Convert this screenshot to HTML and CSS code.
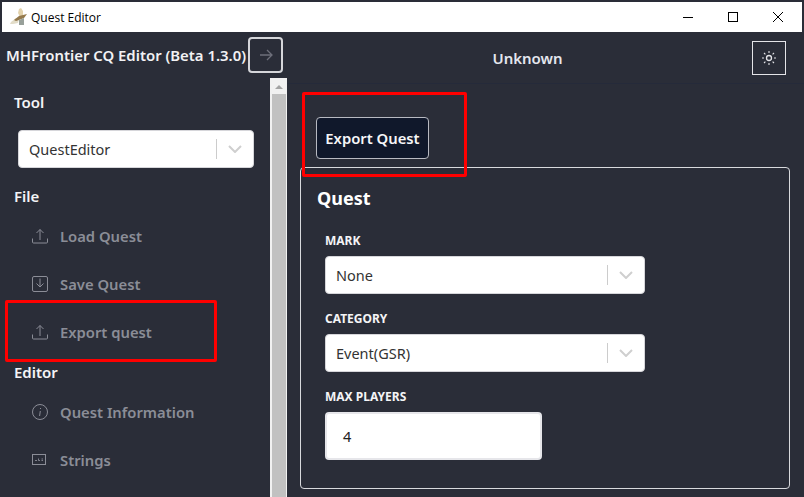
FILE: index.html
```html
<!DOCTYPE html>
<html lang="en">
<head>
  <meta charset="UTF-8">
  <title>Quest Editor</title>
  <link rel="stylesheet" href="styles.css">
</head>
<body>

  <div class="titlebar">
    <svg class="app-icon" width="18" height="18" viewBox="0 0 18 18">
      <path d="M9 1 L11 0 L13 3 L13 8 L10 9 L8 5 Z" fill="#e3d3ae"/>
      <path d="M1 14 L6 10 L9 11 L8 15 L3 16 L0 16 Z" fill="#e2dcc8"/>
      <path d="M4 12 L9 8 L13 7 L17 6 L14 10 L9 12 L6 13 Z" fill="#94794c"/>
      <path d="M9 12 L14 10 L14 17 L9 17 Z" fill="#98a09a"/>
    </svg>
    <span class="titlebar-text">Quest Editor</span>
    <div class="win-controls">
      <svg width="10" height="10" viewBox="0 0 10 10"><path d="M0 5.5H10" stroke="#000" stroke-width="1"/></svg>
      <svg width="10" height="10" viewBox="0 0 10 10"><rect x=".5" y=".5" width="9" height="9" fill="none" stroke="#000"/></svg>
      <svg width="10" height="10" viewBox="0 0 10 10"><path d="M0 0L10 10M10 0L0 10" stroke="#000" stroke-width="1"/></svg>
    </div>
  </div>

  <div class="app">
    <aside class="sidebar">
      <div class="side-header">
        <span class="app-name">MHFrontier CQ Editor (Beta 1.3.0)</span>
        <button class="collapse-btn">
          <svg width="14" height="14" viewBox="0 0 14 14" fill="none" stroke="#6d6f7a" stroke-width="1.3"><path d="M1 7H13M8 2L13 7L8 12"/></svg>
        </button>
      </div>
      <div class="side-body">
        <nav class="side-nav">
          <h3 class="nav-title">Tool</h3>
          <div class="select tool-select">
            <span class="select-value">QuestEditor</span>
            <span class="select-sep"></span>
            <svg class="select-arrow" width="14" height="8" viewBox="0 0 14 8" fill="none" stroke="#cfcfcf" stroke-width="2"><path d="M1 1L7 7L13 1"/></svg>
          </div>

          <h3 class="nav-title file-title">File</h3>
          <a class="nav-item">
            <svg width="16" height="16" viewBox="0 0 16 16" fill="none" stroke="#8b8d97" stroke-width="1"><path d="M.5 10.5V14a1 1 0 0 0 1 1h13a1 1 0 0 0 1-1V10.5M8 12V1.5M4.5 5L8 1.5L11.5 5"/></svg>
            Load Quest
          </a>
          <a class="nav-item">
            <svg width="16" height="16" viewBox="0 0 16 16" fill="none" stroke="#8b8d97" stroke-width="1"><rect x=".5" y=".5" width="15" height="15" rx="1.5"/><path d="M8 2.5V11M4.5 7.5L8 11L11.5 7.5"/></svg>
            Save Quest
          </a>
          <a class="nav-item">
            <svg width="16" height="16" viewBox="0 0 16 16" fill="none" stroke="#8b8d97" stroke-width="1"><path d="M.5 10.5V14a1 1 0 0 0 1 1h13a1 1 0 0 0 1-1V10.5M8 12V1.5M4.5 5L8 1.5L11.5 5"/></svg>
            Export quest
          </a>

          <h3 class="nav-title editor-title">Editor</h3>
          <a class="nav-item">
            <svg width="16" height="16" viewBox="0 0 16 16" fill="none" stroke="#8b8d97" stroke-width="1"><circle cx="8" cy="8" r="7.5"/><path d="M8.3 7L7.6 12M8.5 4V5"/></svg>
            Quest Information
          </a>
          <a class="nav-item">
            <svg width="16" height="16" viewBox="0 0 16 16" fill="none" stroke="#8b8d97" stroke-width="1"><rect x=".5" y="2.5" width="13" height="10"/><path d="M3 8.5H5M6.5 6.5V8.5H8M9.5 7H11M9.5 8.5H11" stroke-width=".9"/></svg>
            Strings
          </a>
        </nav>
        <div class="scrollbar">
          <span class="scroll-up"></span>
          <span class="scroll-thumb"></span>
        </div>
      </div>
    </aside>

    <main class="content">
      <header class="top-header">
        <span class="quest-name">Unknown</span>
        <button class="theme-btn">
          <svg width="14" height="14" viewBox="0 0 14 14" fill="none" stroke="#e4e4e8"><circle cx="7" cy="7" r="2.5" stroke-width="1.3"/><path d="M7 0V2M7 12V14M0 7H2M12 7H14M2 2L3.4 3.4M10.6 10.6L12 12M2 12L3.4 10.6M10.6 3.4L12 2" stroke-width="1.1"/></svg>
        </button>
      </header>

      <div class="content-body">
        <button class="export-btn">Export Quest</button>

        <section class="panel">
          <h2 class="panel-title">Quest</h2>

          <label class="field-label">MARK</label>
          <div class="select field-select">
            <span class="select-value">None</span>
            <span class="select-sep"></span>
            <svg class="select-arrow" width="14" height="8" viewBox="0 0 14 8" fill="none" stroke="#cfcfcf" stroke-width="2"><path d="M1 1L7 7L13 1"/></svg>
          </div>

          <label class="field-label">CATEGORY</label>
          <div class="select field-select">
            <span class="select-value">Event(GSR)</span>
            <span class="select-sep"></span>
            <svg class="select-arrow" width="14" height="8" viewBox="0 0 14 8" fill="none" stroke="#cfcfcf" stroke-width="2"><path d="M1 1L7 7L13 1"/></svg>
          </div>

          <label class="field-label">MAX PLAYERS</label>
          <div class="number-input">4</div>
        </section>
      </div>
    </main>
  </div>

  <!-- marcas rojas sobre la captura -->
  <div class="mark mark-top"></div>
  <div class="mark mark-side"></div>

</body>
</html>
```

FILE: styles.css
```css
* {
  box-sizing: border-box;
}

html, body {
  margin: 0;
  height: 497px;
  overflow: hidden;
}

body {
  position: relative;
  font-family: "Noto Sans", sans-serif;
  background-color: #2a2d38;
  padding-top: 2px;
  display: flex;
  flex-direction: column;
}

.titlebar {
  height: 30px;
  margin: 0 2px;
  background-color: #ffffff;
  display: flex;
  align-items: center;
  padding-left: 8px;
  flex-shrink: 0;
}

.app-icon {
  margin-right: 11px;
}

.titlebar-text {
  font-family: "Open Sans", sans-serif;
  font-size: 12px;
  color: #000;
  margin-left: -8px;
}

.win-controls {
  margin-left: auto;
  display: flex;
  gap: 35px;
  padding-right: 19px;
}

.app {
  flex: 1;
  display: flex;
  min-height: 0;
}

.sidebar {
  width: 287px;
  flex-shrink: 0;
  display: flex;
  flex-direction: column;
}

.side-header {
  height: 46px;
  display: flex;
  align-items: center;
  padding-left: 6px;
}

.app-name {
  font-size: 14.9px;
  font-weight: 600;
  color: #f2f2f4;
  white-space: nowrap;
  width: 242px;
}

.collapse-btn {
  width: 35px;
  height: 36px;
  padding: 0;
  background: transparent;
  border: 2px solid #d5d6da;
  border-radius: 4px;
  display: flex;
  align-items: center;
  justify-content: center;
}

.side-body {
  flex: 1;
  display: flex;
  min-height: 0;
}

.side-nav {
  width: 270px;
  padding: 14px 0 0 14px;
}

.nav-title {
  margin: 0;
  font-size: 15px;
  line-height: 20px;
  font-weight: 600;
  color: #f4f4f6;
}

.select {
  background-color: #ffffff;
  border: 1px solid #d6d6da;
  border-radius: 4px;
  height: 38px;
  display: flex;
  align-items: center;
  padding-left: 10px;
  color: #333;
  font-size: 14.5px;
}

.tool-select {
  width: 236px;
  margin: 18px 0 0 4px;
}

.select-value {
  flex: 1;
}

.select-sep {
  width: 1px;
  height: 20px;
  background-color: #cccccc;
}

.select-arrow {
  margin: 0 11px;
}

.file-title {
  margin-top: 18px;
}

.editor-title {
  margin-top: 6px;
}

.nav-item {
  display: flex;
  align-items: center;
  gap: 12px;
  height: 48px;
  padding-left: 18px;
  font-size: 14.8px;
  font-weight: 600;
  color: #8b8d97;
}

.file-title + .nav-item {
  margin-top: 6px;
}

.editor-title + .nav-item {
  margin-top: 6px;
}

.scrollbar {
  width: 17px;
  background-color: #f1f1f1;
  display: flex;
  flex-direction: column;
  align-items: center;
}

.scroll-up {
  width: 0;
  height: 0;
  margin: 7px 0 5px;
  border-left: 4px solid transparent;
  border-right: 4px solid transparent;
  border-bottom: 4px solid #a3a3a3;
}

.scroll-thumb {
  flex: 1;
  width: 14px;
  background-color: #c1c1c1;
}

.content {
  flex: 1;
  display: flex;
  flex-direction: column;
  min-width: 0;
}

.top-header {
  height: 52px;
  border-bottom: 1px solid #252a3a;
  display: flex;
  align-items: center;
  padding-right: 18px;
  flex-shrink: 0;
}

.quest-name {
  flex: 1;
  text-align: center;
  font-size: 15px;
  font-weight: 600;
  color: #e4e6ee;
  padding-left: 16px;
}

.theme-btn {
  width: 34px;
  height: 34px;
  padding: 0;
  background: transparent;
  border: 1px solid #e4e4e8;
  display: flex;
  align-items: center;
  justify-content: center;
}

.content-body {
  padding: 33px 14px 0 13px;
}

.export-btn {
  display: block;
  width: 113px;
  height: 42px;
  margin-left: 16px;
  padding: 0;
  background-color: #10182b;
  border: 1px solid #b8bac2;
  border-radius: 4px;
  color: #f6f6f8;
  font-family: inherit;
  font-size: 14.8px;
  font-weight: 600;
}

.panel {
  margin-top: 8px;
  height: 322px;
  border: 1px solid #d8d9dd;
  border-radius: 4px;
  padding: 16px 16px 0 24px;
}

.panel-title {
  margin: 0 0 0 -8px;
  font-size: 18px;
  line-height: 28px;
  font-weight: 700;
  color: #ffffff;
}

.field-label {
  display: block;
  font-size: 12px;
  line-height: 16px;
  font-weight: 700;
  color: #f4f4f6;
}

.panel-title + .field-label {
  margin-top: 21px;
}

.field-select {
  width: 320px;
  margin-top: 7px;
  margin-bottom: 17px;
}

.number-input {
  width: 217px;
  height: 48px;
  margin-top: 7px;
  background-color: #ffffff;
  border: 2px solid #e6e6ea;
  border-radius: 4px;
  padding-left: 16px;
  display: flex;
  align-items: center;
  font-size: 14.5px;
  color: #222;
}

.mark {
  position: absolute;
  border: 3px solid #ff0000;
  border-radius: 2px;
}

.mark-top {
  left: 302px;
  top: 92px;
  width: 165px;
  height: 85px;
}

.mark-side {
  left: 5px;
  top: 300px;
  width: 212px;
  height: 62px;
}
```
